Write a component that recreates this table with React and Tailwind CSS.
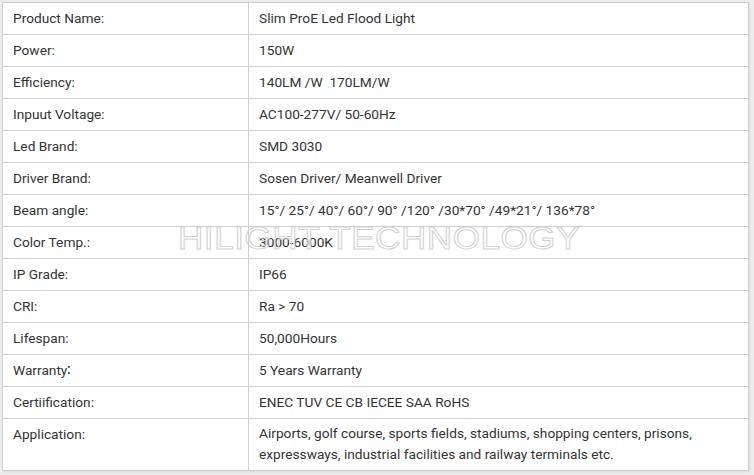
import React from "react";

const rows = [
  ["Product Name:", "Slim ProE Led Flood Light"],
  ["Power:", "150W"],
  ["Efficiency:", "140LM /W  170LM/W"],
  ["Inpuut Voltage:", "AC100-277V/ 50-60Hz"],
  ["Led Brand:", "SMD 3030"],
  ["Driver Brand:", "Sosen Driver/ Meanwell Driver"],
  ["Beam angle:", "15°/ 25°/ 40°/ 60°/ 90° /120° /30*70° /49*21°/ 136*78°"],
  ["Color Temp.:", "3000-6000K"],
  ["IP Grade:", "IP66"],
  ["CRI:", "Ra > 70"],
  ["Lifespan:", "50,000Hours"],
  ["Warranty\u2236", "5 Years Warranty"],
  ["Certiification:", "ENEC TUV CE CB IECEE SAA RoHS"],
];

export default function App() {
  return (
    <div className="w-[754px] h-[475px] bg-[#ededed] pt-[2px] pl-[2px] overflow-hidden" style={{ fontFamily: "Roboto, 'Liberation Sans', sans-serif" }}>
      <div className="relative w-[747px] bg-white border border-[#cfcfcf] text-[13.7px] text-[#333] shadow-[1px_1px_2px_rgba(0,0,0,0.08)]">
        {rows.map(([k, v], i) => (
          <div key={i} className="grid grid-cols-[246px_1fr] h-[32px] border-b border-[#cfcfcf]">
            <div className="flex items-center pl-[10px] border-r border-[#cfcfcf] whitespace-pre">{k}</div>
            <div className="flex items-center pl-[10px] whitespace-pre">{v}</div>
          </div>
        ))}
        <div className="grid grid-cols-[246px_1fr] h-[51px]">
          <div className="pl-[10px] pt-[5px] border-r border-[#cfcfcf]">Application:</div>
          <div className="pl-[10px] pt-[4px] leading-[21px]">
            Airports, golf course, sports fields, stadiums, shopping centers, prisons,
            <br />
            expressways, industrial facilities and railway terminals etc.
          </div>
        </div>
        <div
          className="absolute left-[175px] top-[219px] origin-left scale-x-[1.13] text-[31px] leading-[34px] tracking-[0.5px] text-transparent whitespace-nowrap pointer-events-none [-webkit-text-stroke:1px_#d2d2d2]"
          style={{ fontFamily: "'Liberation Sans', Arial, sans-serif" }}
        >
          HILIGHT TECHNOLOGY
        </div>
      </div>
    </div>
  );
}
